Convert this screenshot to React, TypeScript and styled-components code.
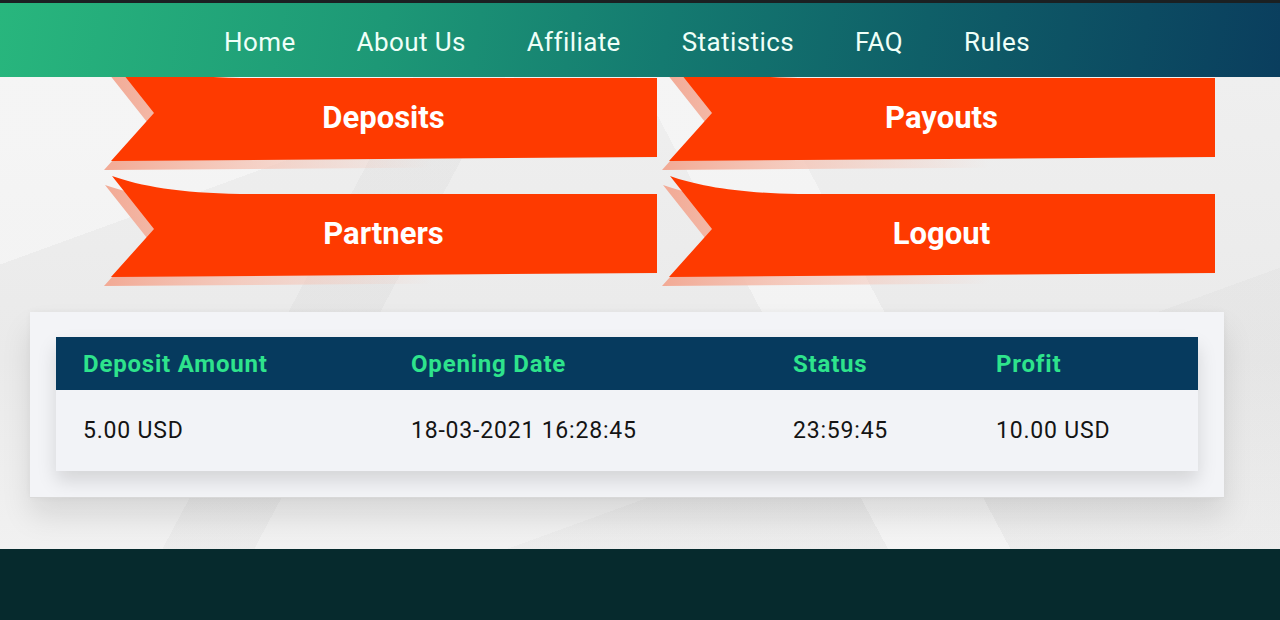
import React from "react";
import styled, { createGlobalStyle } from "styled-components";

const links = ["Home", "About Us", "Affiliate", "Statistics", "FAQ", "Rules"];
const ribbons = ["Deposits", "Payouts", "Partners", "Logout"];

const deposits = [
	{ amount: "5.00 USD", date: "18-03-2021 16:28:45", status: "23:59:45", profit: "10.00 USD" },
];

const RIBBON = "M2,0 C30,10 70,17 130,18 L547,18 L547,97 L1,101 L44,53 Z";

const Ribbon = ({ label, idx }: { label: string; idx: number }) => (
	<RibbonButton>
		<RibbonArt viewBox="0 0 547 116" preserveAspectRatio="none">
			<defs>
				<linearGradient id={`fade${idx}`} x1="0" x2="1" y1="0" y2="0">
					<stop offset="0" stopColor="#f2a994" />
					<stop offset="0.25" stopColor="#f5c4b5" stopOpacity="0.8" />
					<stop offset="0.6" stopColor="#f5c4b5" stopOpacity="0" />
				</linearGradient>
			</defs>
			<path d={RIBBON} transform="translate(-7 9)" fill={`url(#fade${idx})`} />
			<path d={RIBBON} fill="#fe3a00" />
		</RibbonArt>
		<RibbonLabel>{label}</RibbonLabel>
	</RibbonButton>
);

const App = () => {
	return (
		<Page>
			<GlobalStyle />
			<TopStrip />
			<Nav>
				{links.map((l) => (
					<NavLink key={l}>{l}</NavLink>
				))}
			</Nav>
			<Main>
				<RibbonGrid>
					{ribbons.map((r, i) => (
						<Ribbon key={r} label={r} idx={i} />
					))}
				</RibbonGrid>

				<Panel>
					<Table>
						<HeadRow>
							<HeadCell>Deposit Amount</HeadCell>
							<HeadCell>Opening Date</HeadCell>
							<HeadCell>Status</HeadCell>
							<HeadCell>Profit</HeadCell>
						</HeadRow>
						{deposits.map((d) => (
							<BodyRow key={d.date}>
								<BodyCell>{d.amount}</BodyCell>
								<BodyCell>{d.date}</BodyCell>
								<BodyCell>{d.status}</BodyCell>
								<BodyCell>{d.profit}</BodyCell>
							</BodyRow>
						))}
					</Table>
				</Panel>
			</Main>
			<Footer />
		</Page>
	);
};

export default App;

const GlobalStyle = createGlobalStyle`
	* {
		box-sizing: border-box;
	}
	body {
		margin: 0;
		font-family: Roboto, "Liberation Sans", sans-serif;
		background: #062a2d;
	}
`;

const Page = styled.div`
	width: 1280px;
	height: 620px;
	overflow: hidden;
	display: flex;
	flex-direction: column;
`;

const TopStrip = styled.div`
	height: 3px;
	background-color: #1b2022;
`;

const Nav = styled.nav`
	position: relative;
	z-index: 2;
	height: 74px;
	display: flex;
	align-items: center;
	justify-content: center;
	gap: 61px;
	padding-right: 26px;
	background: linear-gradient(100deg, #28b67d 0%, #1d9876 30%, #147a70 52%, #0f5f68 72%, #0a3e5e 100%);
`;

const NavLink = styled.a`
	color: #effff8;
	font-size: 26px;
	font-weight: 400;
	letter-spacing: 0.4px;
	cursor: pointer;
	padding-top: 3px;
`;

const Main = styled.main`
	height: 472px;
	display: flex;
	flex-direction: column;
	background:
		linear-gradient(118deg, transparent 0 27%, rgba(0, 0, 0, 0.022) 27% 33%, transparent 33%),
		linear-gradient(62deg, transparent 0 58%, rgba(255, 255, 255, 0.4) 58% 66%, transparent 66%),
		linear-gradient(160deg, rgba(255, 255, 255, 0.4) 0 20%, transparent 20% 70%, rgba(0, 0, 0, 0.02) 70%),
		linear-gradient(180deg, #efefef 0%, #eaeaea 60%, #f1f1f1 100%);
`;

const RibbonGrid = styled.div`
	margin-top: -17px;
	padding-left: 110px;
	display: grid;
	grid-template-columns: 547px 547px;
	grid-auto-rows: 116px;
	column-gap: 11px;
`;

const RibbonButton = styled.div`
	position: relative;
	height: 116px;
	cursor: pointer;
`;

const RibbonArt = styled.svg`
	position: absolute;
	inset: 0;
	width: 100%;
	height: 100%;
	overflow: visible;
`;

const RibbonLabel = styled.div`
	position: relative;
	margin-top: 18px;
	height: 78px;
	display: flex;
	align-items: center;
	justify-content: center;
	color: #ffffff;
	font-size: 31px;
	font-weight: 700;
`;

const Panel = styled.section`
	margin: 20px 0 0 30px;
	width: 1194px;
	padding: 25px 26px 26px;
	background-color: #f3f4f7;
	border-bottom: 1px solid #d9d9d9;
	box-shadow: 0 18px 28px rgba(0, 0, 0, 0.1), 0 0 6px rgba(0, 0, 0, 0.04);
`;

const Table = styled.div`
	box-shadow: 0 10px 18px rgba(0, 0, 0, 0.13);
`;

const HeadRow = styled.div`
	height: 53px;
	display: grid;
	grid-template-columns: 328px 382px 203px 1fr;
	align-items: center;
	padding-left: 27px;
	background-color: #063a5e;
`;

const HeadCell = styled.div`
	color: #2ee38c;
	font-size: 24px;
	font-weight: 700;
	letter-spacing: 0.8px;
`;

const BodyRow = styled(HeadRow)`
	height: 81px;
	background-color: #f2f3f7;
`;

const BodyCell = styled.div`
	color: #141414;
	font-size: 23px;
	font-weight: 400;
	letter-spacing: 0.8px;
`;

const Footer = styled.footer`
	height: 71px;
	background-color: #062a2d;
`;
